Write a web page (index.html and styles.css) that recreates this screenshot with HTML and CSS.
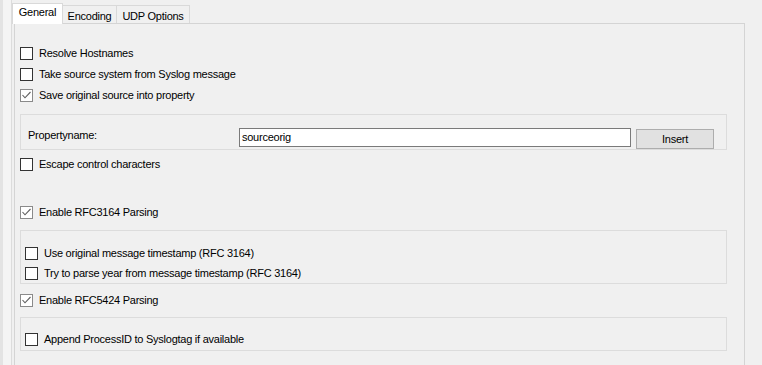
FILE: index.html
```html
<!DOCTYPE html>
<html>
<head>
<meta charset="utf-8">
<link rel="stylesheet" href="styles.css">
</head>
<body>
<div class="window">
  <div class="edge"></div>
  <div class="gutter"></div>
  <div class="tabctl">
    <div class="tabs">
      <div class="tab selected">General</div>
      <div class="tab enc">Encoding</div>
      <div class="tab udp">UDP Options</div>
    </div>
    <div class="panel">
      <div class="row"><span class="cb"></span><span class="lbl">Resolve Hostnames</span></div>
      <div class="row"><span class="cb"></span><span class="lbl">Take source system from Syslog message</span></div>
      <div class="row"><span class="cb checked"><svg width="11" height="11" viewBox="0 0 11 11"><polyline points="1.5,5 4,7.8 9.5,2" fill="none" stroke="#5f5f5f" stroke-width="1.1"/></svg></span><span class="lbl">Save original source into property</span></div>

      <div class="group g1">
        <span class="prop-label">Propertyname:</span>
        <div class="input">sourceorig</div>
        <div class="button">Insert</div>
      </div>

      <div class="row r-escape"><span class="cb"></span><span class="lbl">Escape control characters</span></div>
      <div class="row r-3164"><span class="cb checked"><svg width="11" height="11" viewBox="0 0 11 11"><polyline points="1.5,5 4,7.8 9.5,2" fill="none" stroke="#5f5f5f" stroke-width="1.1"/></svg></span><span class="lbl">Enable RFC3164 Parsing</span></div>

      <div class="group g2">
        <div class="row short"><span class="cb"></span><span class="lbl">Use original message timestamp (RFC 3164)</span></div>
        <div class="row short"><span class="cb"></span><span class="lbl">Try to parse year from message timestamp (RFC 3164)</span></div>
      </div>

      <div class="row r-5424"><span class="cb checked"><svg width="11" height="11" viewBox="0 0 11 11"><polyline points="1.5,5 4,7.8 9.5,2" fill="none" stroke="#5f5f5f" stroke-width="1.1"/></svg></span><span class="lbl">Enable RFC5424 Parsing</span></div>

      <div class="group g3">
        <div class="row"><span class="cb"></span><span class="lbl">Append ProcessID to Syslogtag if available</span></div>
      </div>
    </div>
  </div>
</div>
</body>
</html>
```

FILE: styles.css
```css
html, body {
  margin: 0;
  padding: 0;
  background: #f0f0f0;
}
body {
  font-family: "Liberation Sans", Arial, sans-serif;
  font-size: 11px;
  letter-spacing: -0.25px;
  color: #000;
}
.window {
  display: flex;
  height: 365px;
  overflow: hidden;
}
.edge {
  width: 3px;
  background: #e3e3e3;
  flex: none;
}
.gutter {
  width: 8px;
  background: #f4f4f4;
  border-right: 1px solid #dcdcdc;
  flex: none;
}
.tabctl {
  flex: none;
  width: 733px;
  padding-top: 3px;
  display: flex;
  flex-direction: column;
}
.tabs {
  display: flex;
  align-items: flex-end;
  height: 20px;
  position: relative;
  z-index: 1;
  flex: none;
}
.tab {
  box-sizing: border-box;
  height: 18px;
  border: 1px solid #d9d9d9;
  border-bottom: none;
  background: #f0f0f0;
  text-align: center;
  padding-top: 4px;
  line-height: 13px;
  white-space: nowrap;
}
.tab.selected {
  width: 51px;
  height: 21px;
  margin-bottom: -1px;
  background: #ffffff;
  padding-top: 2px;
}
.tab.enc {
  width: 54px;
  border-left: none;
}
.tab.udp {
  width: 73px;
  border-left: none;
}
.panel {
  margin-left: 2px;
  width: 731px;
  height: 360px;
  flex: none;
  box-sizing: border-box;
  border: 1px solid #d4d4d4;
  background: #f0f0f0;
  padding: 19px 0 0 5px;
}
.row {
  display: flex;
  align-items: center;
  height: 21px;
  gap: 6px;
  white-space: nowrap;
}
.row.short {
  height: 20px;
}
.cb {
  flex: none;
  box-sizing: border-box;
  width: 13px;
  height: 13px;
  border: 1px solid #333333;
  background: #ffffff;
  display: flex;
  align-items: center;
  justify-content: center;
}
.cb.checked {
  border-color: #8a8a8a;
}
.cb svg {
  display: block;
}
.lbl {
  line-height: 13px;
}
.group {
  box-sizing: border-box;
  margin-right: 17px;
  border: 1px solid #dcdcdc;
}
.g1 {
  margin-top: 8px;
  height: 36px;
  display: flex;
  align-items: flex-start;
  padding: 13px 0 0 7px;
}
.prop-label {
  width: 211px;
  flex: none;
  line-height: 14px;
}
.input {
  flex: none;
  box-sizing: border-box;
  width: 392px;
  height: 19px;
  border: 1px solid #7a7a7a;
  background: #ffffff;
  padding-left: 2px;
  line-height: 17px;
}
.button {
  flex: none;
  box-sizing: border-box;
  width: 78px;
  height: 20px;
  margin: 1px 0 0 5px;
  border: 1px solid #adadad;
  background: #e1e1e1;
  text-align: center;
  line-height: 18px;
}
.r-escape {
  margin-top: 4px;
}
.r-3164 {
  margin-top: 27px;
}
.g2 {
  margin-top: 7px;
  height: 54px;
  padding: 12px 0 0 4px;
}
.r-5424 {
  margin-top: 6px;
}
.g3 {
  margin-top: 6px;
  height: 34px;
  padding: 11px 0 0 4px;
}
```
